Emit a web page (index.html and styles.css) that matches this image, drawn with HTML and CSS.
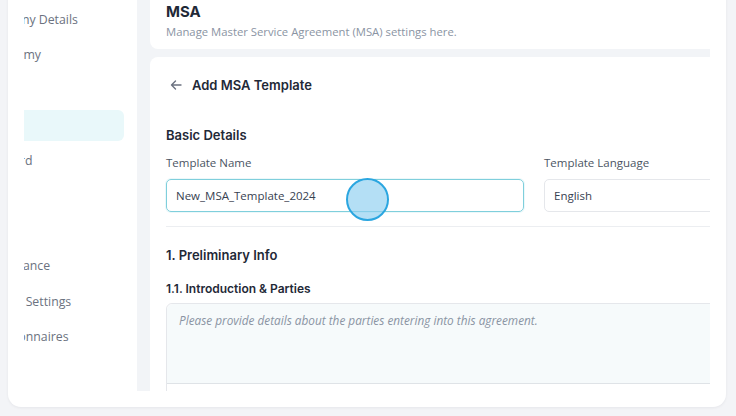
FILE: index.html
```html
<!DOCTYPE html>
<html lang="en">
<head>
<meta charset="utf-8">
<title>MSA Settings</title>
<link rel="stylesheet" href="styles.css">
</head>
<body>
<div class="shell">
  <aside class="sidebar">
    <ul class="nav">
      <li class="nav-item">Company Details</li>
      <li class="nav-item">Taxonomy</li>
      <li class="nav-item">Users</li>
      <li class="nav-item active">MSA</li>
      <li class="nav-item">Onboard</li>
      <li class="nav-item">Roles</li>
      <li class="nav-item">Teams</li>
      <li class="nav-item">Governance</li>
      <li class="nav-item">System Settings</li>
      <li class="nav-item">Questionnaires</li>
    </ul>
  </aside>
  <main class="main">
    <section class="card header-card">
      <h1 class="page-title">MSA</h1>
      <p class="page-sub">Manage Master Service Agreement (MSA) settings here.</p>
    </section>
    <section class="card form-card">
      <div class="back-row">
        <svg class="back-icon" width="16" height="16" viewBox="0 0 16 16" fill="none" stroke="#6b7280" stroke-width="1.4" stroke-linecap="round" stroke-linejoin="round"><path d="M13 8H3.5M7.5 4L3.5 8l4 4"/></svg>
        <span class="back-title">Add MSA Template</span>
      </div>
      <h2 class="section-title">Basic Details</h2>
      <div class="fields">
        <div class="field">
          <label class="label">Template Name</label>
          <div class="input focused">New_MSA_Template_2024</div>
        </div>
        <div class="field">
          <label class="label">Template Language</label>
          <div class="input">English</div>
        </div>
      </div>
      <hr class="divider">
      <h2 class="section-title prelim">1. Preliminary Info</h2>
      <h3 class="sub-title">1.1. Introduction &amp; Parties</h3>
      <div class="editor">
        <div class="editor-body">Please provide details about the parties entering into this agreement.</div>
        <div class="editor-foot"></div>
      </div>
    </section>
  </main>
</div>
<div class="cursor"></div>
</body>
</html>
```

FILE: styles.css
```css
* { box-sizing: border-box; }
html, body { margin: 0; padding: 0; }
body {
  width: 736px;
  height: 416px;
  overflow: hidden;
  background: #f3f4f7;
  font-family: "Open Sans", "Liberation Sans", sans-serif;
  position: relative;
}
.shell {
  margin: -16px 0 0 8px;
  width: 718px;
  height: 423px;
  background: #fff;
  border-radius: 13px;
  box-shadow: 0 1px 3px rgba(15, 23, 42, 0.06);
  padding: 16px;
  display: flex;
}
.sidebar {
  width: 113px;
  flex: none;
  overflow: hidden;
  padding-right: 13px;
}
.nav {
  list-style: none;
  margin: 0 0 0 -66px;
  padding: 4px 0 0 0;
  width: 166px;
  display: flex;
  flex-direction: column;
  gap: 4.2px;
}
.nav-item {
  height: 31px;
  line-height: 31px;
  padding-left: 23px;
  font-size: 12.3px;
  color: #6b7280;
  white-space: nowrap;
  border-radius: 6px;
}
.nav-item.active {
  background: #e9f8fa;
  color: transparent;
}
.main {
  flex: 1;
  background: #f2f4f7;
  overflow: hidden;
  padding-left: 13px;
  display: flex;
  flex-direction: column;
  gap: 8px;
}
.card {
  background: #fff;
  width: 600px;
  flex: none;
  border-radius: 8px 0 0 8px;
}
.header-card {
  height: 49px;
  padding: 3px 16px 0;
  border-radius: 0 0 0 8px;
}
.page-title {
  margin: 0;
  font-family: Inter, "Noto Sans", sans-serif;
  font-weight: 700;
  font-size: 15px;
  line-height: 18px;
  color: #1f2937;
}
.page-sub {
  margin: 3px 0 0;
  font-size: 11.3px;
  line-height: 16px;
  color: #8a94a3;
}
.form-card {
  flex: 1;
  padding: 18px 0 0 16px;
  border-radius: 8px 0 0 0;
}
.back-row {
  display: flex;
  align-items: center;
  height: 20px;
  gap: 8px;
  padding-left: 2px;
}
.back-icon { display: block; }
.back-title {
  font-family: Inter, "Noto Sans", sans-serif;
  font-weight: 600;
  font-size: 13px;
  color: #1f2937;
}
.section-title {
  margin: 30px 0 0;
  font-family: Inter, "Noto Sans", sans-serif;
  font-weight: 600;
  font-size: 13px;
  line-height: 20px;
  color: #1f2937;
}
.fields {
  display: flex;
  gap: 20px;
  margin-top: 10px;
}
.field { width: 358px; flex: none; }
.label {
  display: block;
  font-size: 11.5px;
  line-height: 16px;
  color: #4b5563;
}
.input {
  margin-top: 8px;
  height: 33px;
  border: 1px solid #e5e7eb;
  border-radius: 5px;
  padding: 0 9px;
  line-height: 31px;
  font-size: 11.5px;
  color: #374151;
}
.input.focused {
  border-color: #7fcfdc;
  box-shadow: 0 0 0 1px rgba(127, 207, 220, 0.15);
}
.divider {
  border: 0;
  border-top: 1px solid #eceef1;
  margin: 14px 0 0;
}
.section-title.prelim { margin-top: 18px; }
.sub-title {
  margin: 16px 0 0;
  font-family: Inter, "Noto Sans", sans-serif;
  font-weight: 600;
  font-size: 12px;
  line-height: 16px;
  color: #1f2937;
}
.editor {
  margin-top: 6px;
  border: 1px solid #e5e7eb;
  border-radius: 6px 0 0 0;
}
.editor-body {
  height: 80px;
  background: #f6fafb;
  padding: 8px 12px;
  font-size: 11.8px;
  font-style: italic;
  color: #8a94a3;
  border-bottom: 1px solid #dfe3e7;
  border-radius: 6px 0 0 0;
}
.editor-foot { height: 30px; background: #fff; }
.cursor {
  position: absolute;
  left: 346px;
  top: 178px;
  width: 43px;
  height: 43px;
  border-radius: 50%;
  background: rgba(140, 206, 240, 0.65);
  border: 2px solid #2ba6e0;
}
```
